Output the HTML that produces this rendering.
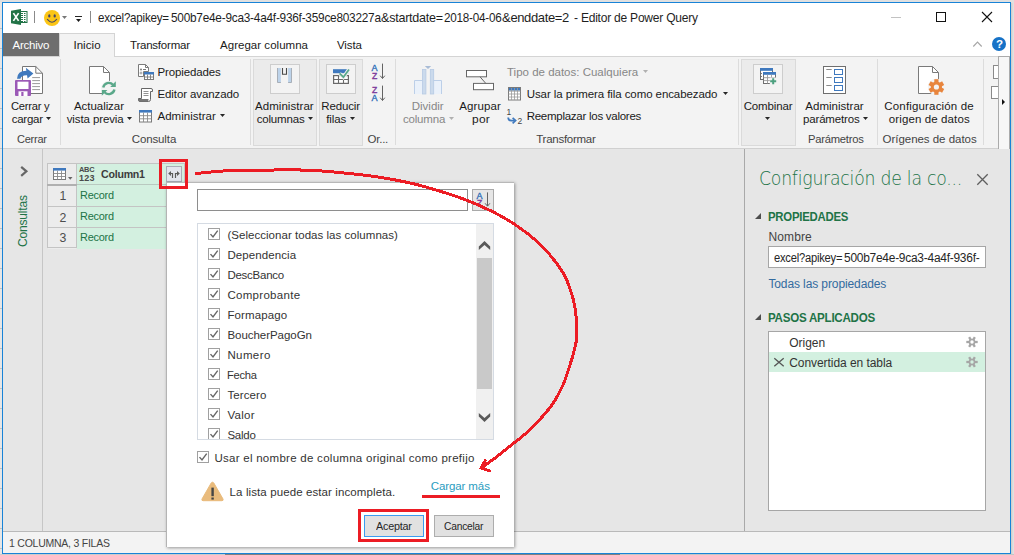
<!DOCTYPE html>
<html lang="es"><head><meta charset="utf-8"><title>Editor de Power Query</title>
<style>
html,body{margin:0;padding:0;}
body{width:1014px;height:555px;overflow:hidden;position:relative;background:#e2e2e2;font-family:"Liberation Sans",sans-serif;}
#w{position:absolute;left:0;top:0;width:1014px;height:555px;overflow:hidden;}
#w div,#w span.t,#w svg{position:absolute;box-sizing:border-box;}
#w svg{overflow:visible;}
span.t{white-space:pre;display:block;}
</style></head><body><div id="w">
<div style="left:0px;top:0px;width:1014px;height:555px;background:#e0e0e0"></div>
<div style="left:0px;top:554px;width:1014px;height:1px;background:linear-gradient(90deg,#cdcdcd 0,#cdcdcd 225px,#808080 225px,#808080 620px,#c6c6c6 620px)"></div>
<div style="left:0px;top:2px;width:2px;height:552px;background:repeating-linear-gradient(180deg,#e6e6e6 0,#e6e6e6 19px,#c2c2c2 19px,#c2c2c2 20px);background-position:0 7px"></div>
<div style="left:1011px;top:3px;width:3px;height:551px;background:linear-gradient(90deg,#cfcac7,#dedcdb 60%,#e4e4e4)"></div>
<div style="left:2px;top:2px;width:1009px;height:552px;background:#fff;border:1px solid #1883d7"></div>
<span class="t" style="left:98.3px;top:11.00px;font-size:13px;line-height:13px;color:#1e1e1e;letter-spacing:-0.250px;transform:scaleX(0.8903);transform-origin:0 0;">excel?apikey=</span>
<span class="t" style="left:170.5px;top:11.00px;font-size:13px;line-height:13px;color:#1e1e1e;letter-spacing:-0.250px;transform:scaleX(0.9082);transform-origin:0 0;">500b7e4e-9ca3-4a4f-936f-359ce803227a</span>
<span class="t" style="left:380.6px;top:11.00px;font-size:13px;line-height:13px;color:#1e1e1e;letter-spacing:-0.250px;transform:scaleX(0.9649);transform-origin:0 0;">&amp;startdate=</span>
<span class="t" style="left:444px;top:11.00px;font-size:13px;line-height:13px;color:#1e1e1e;letter-spacing:-0.250px;transform:scaleX(0.8981);transform-origin:0 0;">2018-04-06</span>
<span class="t" style="left:502.1px;top:11.00px;font-size:13px;line-height:13px;color:#1e1e1e;letter-spacing:-0.376px;">&amp;enddate=2</span>
<span class="t" style="left:573.8px;top:11.00px;font-size:13px;line-height:13px;color:#1e1e1e;letter-spacing:-0.250px;transform:scaleX(0.9257);transform-origin:0 0;">- Editor de Power Query</span>
<div style="left:34px;top:11px;width:1px;height:12px;background:#8a8a8a"></div>
<div style="left:90px;top:11px;width:1px;height:12px;background:#8a8a8a"></div>
<svg style="left:11px;top:9px" width="16" height="16" viewBox="0 0 16 16"><rect x="8" y="2.5" width="8" height="11" fill="#fff" stroke="#217346" stroke-width="1"/>
<path d="M9.5 4.5h5M9.5 6.5h5M9.5 8.5h5M9.5 10.5h5M9.5 12.5h5" stroke="#217346" stroke-width="1"/><path d="M12.5 3v10" stroke="#fff" stroke-width="1"/>
<path d="M0 1.8L10 0v16L0 14.2Z" fill="#217346"/>
<path d="M2.4 4.1L7.6 11.9M7.6 4.1L2.4 11.9" stroke="#fff" stroke-width="1.7"/></svg>
<svg style="left:43.5px;top:10px" width="16" height="16" viewBox="0 0 16 16"><circle cx="8" cy="8" r="8" fill="#fbc516"/>
<ellipse cx="5.3" cy="5.9" rx="1.15" ry="1.7" fill="#45456a"/><ellipse cx="10.7" cy="5.9" rx="1.15" ry="1.7" fill="#45456a"/>
<path d="M3.4 9.4Q8 15 12.6 9.4" fill="none" stroke="#4a4a66" stroke-width="1.1" stroke-linecap="round"/></svg>
<svg style="left:62px;top:16px" width="5" height="3" viewBox="0 0 5 3"><path d="M0 0H5L2.5 3Z" fill="#777"/></svg>
<div style="left:75px;top:16px;width:7px;height:1px;background:#262626"></div>
<svg style="left:76px;top:19px" width="5" height="3" viewBox="0 0 5 3"><path d="M0 0H5L2.5 3Z" fill="#1a1a1a"/></svg>
<div style="left:891px;top:17px;width:10px;height:1px;background:#c2c2c2"></div>
<div style="left:936px;top:12px;width:10px;height:10px;border:1px solid #111"></div>
<svg style="left:982px;top:12px" width="10" height="10" viewBox="0 0 10 10"><path d="M0 0L10 10M10 0L0 10" stroke="#111" stroke-width="1.1"/></svg>
<div style="left:3px;top:33px;width:56px;height:23px;background:#6e6e6e"></div>
<div style="left:3px;top:56px;width:1007px;height:93px;background:#f3f3f3;border-bottom:1px solid #d0d0d0"></div>
<div style="left:59px;top:33px;width:56px;height:24px;background:#f3f3f3;border:1px solid #d4d4d4;border-bottom:none"></div>
<div style="left:3px;top:56px;width:56px;height:1px;background:#d4d4d4"></div>
<div style="left:115px;top:56px;width:895px;height:1px;background:#d4d4d4"></div>
<span class="t" style="left:12.5px;top:40.00px;font-size:11.5px;line-height:11.5px;color:#fff;letter-spacing:-0.227px;">Archivo</span>
<span class="t" style="left:73.4px;top:40.00px;font-size:11.5px;line-height:11.5px;color:#1a1a1a;letter-spacing:0.068px;">Inicio</span>
<span class="t" style="left:130px;top:40.00px;font-size:11.5px;line-height:11.5px;color:#1a1a1a;letter-spacing:-0.220px;">Transformar</span>
<span class="t" style="left:220px;top:40.00px;font-size:11.5px;line-height:11.5px;color:#1a1a1a;letter-spacing:0.030px;">Agregar columna</span>
<span class="t" style="left:337px;top:40.00px;font-size:11.5px;line-height:11.5px;color:#1a1a1a;letter-spacing:-0.090px;">Vista</span>
<svg style="left:972.5px;top:41px" width="9" height="6" viewBox="0 0 9 6"><path d="M0.3 5.5L4.5 1L8.7 5.5" fill="none" stroke="#a6a6a6" stroke-width="1.1"/></svg>
<svg style="left:992px;top:37px" width="14" height="14" viewBox="0 0 14 14"><circle cx="7" cy="7" r="7" fill="#1672c7"/></svg>
<span class="t" style="left:996px;top:39.00px;font-size:11.5px;line-height:11.5px;color:#fff;font-weight:700;">?</span>
<div style="left:60px;top:59px;width:1px;height:86px;background:#dcdcdc"></div>
<div style="left:250px;top:59px;width:1px;height:86px;background:#dcdcdc"></div>
<div style="left:395px;top:59px;width:1px;height:86px;background:#dcdcdc"></div>
<div style="left:738px;top:59px;width:1px;height:86px;background:#dcdcdc"></div>
<div style="left:877px;top:59px;width:1px;height:86px;background:#dcdcdc"></div>
<div style="left:983px;top:59px;width:1px;height:86px;background:#dcdcdc"></div>
<span class="t" style="left:16.7px;top:134.00px;font-size:11.5px;line-height:11.5px;color:#444;letter-spacing:-0.250px;transform:scaleX(0.9571);transform-origin:0 0;">Cerrar</span>
<span class="t" style="left:131.7px;top:134.00px;font-size:11.5px;line-height:11.5px;color:#444;letter-spacing:-0.113px;">Consulta</span>
<span class="t" style="left:367.5px;top:134.00px;font-size:11.5px;line-height:11.5px;color:#444;letter-spacing:-0.234px;">Or...</span>
<span class="t" style="left:536.3px;top:134.00px;font-size:11.5px;line-height:11.5px;color:#444;letter-spacing:-0.270px;">Transformar</span>
<span class="t" style="left:807.5px;top:134.00px;font-size:11.5px;line-height:11.5px;color:#444;letter-spacing:-0.250px;transform:scaleX(0.9757);transform-origin:0 0;">Parámetros</span>
<span class="t" style="left:882.5px;top:134.00px;font-size:11.5px;line-height:11.5px;color:#444;letter-spacing:-0.027px;">Orígenes de datos</span>
<span class="t" style="left:11.3px;top:101.00px;font-size:11.5px;line-height:11.5px;color:#1a1a1a;letter-spacing:-0.250px;transform:scaleX(0.9728);transform-origin:0 0;">Cerrar y</span>
<span class="t" style="left:11.7px;top:114.00px;font-size:11.5px;line-height:11.5px;color:#1a1a1a;letter-spacing:-0.262px;">cargar</span>
<svg style="left:46px;top:117.3px" width="5" height="3" viewBox="0 0 5 3"><path d="M0 0H5L2.5 3Z" fill="#262626"/></svg>
<span class="t" style="left:74px;top:101.00px;font-size:11.5px;line-height:11.5px;color:#1a1a1a;letter-spacing:-0.056px;">Actualizar</span>
<span class="t" style="left:66.7px;top:114.00px;font-size:11.5px;line-height:11.5px;color:#1a1a1a;letter-spacing:-0.107px;">vista previa</span>
<svg style="left:126.7px;top:117.3px" width="5" height="3" viewBox="0 0 5 3"><path d="M0 0H5L2.5 3Z" fill="#262626"/></svg>
<span class="t" style="left:157.5px;top:67.00px;font-size:11.5px;line-height:11.5px;color:#1a1a1a;letter-spacing:-0.128px;">Propiedades</span>
<span class="t" style="left:157.5px;top:89.00px;font-size:11.5px;line-height:11.5px;color:#1a1a1a;letter-spacing:-0.102px;">Editor avanzado</span>
<span class="t" style="left:157.5px;top:111.00px;font-size:11.5px;line-height:11.5px;color:#1a1a1a;letter-spacing:0.014px;">Administrar</span>
<svg style="left:220px;top:114px" width="5" height="3" viewBox="0 0 5 3"><path d="M0 0H5L2.5 3Z" fill="#262626"/></svg>
<div style="left:253px;top:59px;width:64px;height:87px;background:#ebebeb;border:1px solid #dadada"></div>
<div style="left:270px;top:64px;width:30px;height:30px;background:#f3f3f3;border:1px solid #cdcdcd"></div>
<div style="left:319px;top:59px;width:44px;height:87px;background:#ebebeb;border:1px solid #dadada"></div>
<div style="left:326px;top:64px;width:30px;height:30px;background:#f3f3f3;border:1px solid #cdcdcd"></div>
<div style="left:741px;top:59px;width:55px;height:87px;background:#ebebeb;border:1px solid #dadada"></div>
<div style="left:753px;top:64px;width:30px;height:30px;background:#f3f3f3;border:1px solid #cdcdcd"></div>
<span class="t" style="left:255px;top:101.00px;font-size:11.5px;line-height:11.5px;color:#1a1a1a;letter-spacing:0.054px;">Administrar</span>
<span class="t" style="left:256.7px;top:114.00px;font-size:11.5px;line-height:11.5px;color:#1a1a1a;letter-spacing:-0.174px;">columnas</span>
<svg style="left:308px;top:117.3px" width="5" height="3" viewBox="0 0 5 3"><path d="M0 0H5L2.5 3Z" fill="#262626"/></svg>
<span class="t" style="left:321.3px;top:101.00px;font-size:11.5px;line-height:11.5px;color:#1a1a1a;letter-spacing:-0.157px;">Reducir</span>
<span class="t" style="left:326.2px;top:114.00px;font-size:11.5px;line-height:11.5px;color:#1a1a1a;letter-spacing:-0.088px;">filas</span>
<svg style="left:349.7px;top:117.3px" width="5" height="3" viewBox="0 0 5 3"><path d="M0 0H5L2.5 3Z" fill="#262626"/></svg>
<span class="t" style="left:411.7px;top:101.00px;font-size:11.5px;line-height:11.5px;color:#878787;letter-spacing:0.008px;">Dividir</span>
<span class="t" style="left:403px;top:114.00px;font-size:11.5px;line-height:11.5px;color:#878787;letter-spacing:-0.195px;">columna</span>
<svg style="left:449.2px;top:117.3px" width="5" height="3" viewBox="0 0 5 3"><path d="M0 0H5L2.5 3Z" fill="#b0b0b0"/></svg>
<span class="t" style="left:459.2px;top:101.00px;font-size:11.5px;line-height:11.5px;color:#1a1a1a;letter-spacing:0.113px;">Agrupar</span>
<span class="t" style="left:471.7px;top:114.00px;font-size:11.5px;line-height:11.5px;color:#1a1a1a;letter-spacing:0.250px;transform:scaleX(1.0394);transform-origin:0 0;">por</span>
<span class="t" style="left:507px;top:67.00px;font-size:11.5px;line-height:11.5px;color:#878787;">Tipo de datos: Cualquiera</span>
<svg style="left:643px;top:70px" width="5" height="3" viewBox="0 0 5 3"><path d="M0 0H5L2.5 3Z" fill="#b0b0b0"/></svg>
<span class="t" style="left:526.7px;top:89.00px;font-size:11.5px;line-height:11.5px;color:#1a1a1a;letter-spacing:-0.082px;">Usar la primera fila como encabezado</span>
<svg style="left:722.8px;top:92.3px" width="5" height="3" viewBox="0 0 5 3"><path d="M0 0H5L2.5 3Z" fill="#262626"/></svg>
<span class="t" style="left:526.7px;top:111.00px;font-size:11.5px;line-height:11.5px;color:#1a1a1a;letter-spacing:-0.265px;">Reemplazar los valores</span>
<span class="t" style="left:743.7px;top:101.00px;font-size:11.5px;line-height:11.5px;color:#1a1a1a;letter-spacing:-0.151px;">Combinar</span>
<svg style="left:765px;top:117.3px" width="5" height="3" viewBox="0 0 5 3"><path d="M0 0H5L2.5 3Z" fill="#262626"/></svg>
<span class="t" style="left:805.3px;top:101.00px;font-size:11.5px;line-height:11.5px;color:#1a1a1a;letter-spacing:0.024px;">Administrar</span>
<span class="t" style="left:803px;top:114.00px;font-size:11.5px;line-height:11.5px;color:#1a1a1a;letter-spacing:-0.164px;">parámetros</span>
<svg style="left:863px;top:117.3px" width="5" height="3" viewBox="0 0 5 3"><path d="M0 0H5L2.5 3Z" fill="#262626"/></svg>
<span class="t" style="left:884.3px;top:101.00px;font-size:11.5px;line-height:11.5px;color:#1a1a1a;letter-spacing:0.163px;">Configuración de</span>
<span class="t" style="left:888.8px;top:114.00px;font-size:11.5px;line-height:11.5px;color:#1a1a1a;letter-spacing:0.115px;">origen de datos</span>
<svg style="left:15px;top:66px" width="28" height="30" viewBox="0 0 28 30"><path d="M7.5 0.5H20.8L27.5 7.2V27.5H7.5Z" fill="#fff" stroke="#767676"/><path d="M20.8 0.5V7.2H27.5" fill="none" stroke="#767676"/>
<path d="M17.2 11.6h7.8M17.2 14.6h7.8M17.2 17.6h7.8M17.2 20.6h7.8M17.2 23.6h7.8" stroke="#9a9a9a"/>
<path d="M2 12.8Q2.2 5 11.4 4.8L10.8 1.8L18.4 7.4L12.6 12.6L12 9.2Q6.2 9 5.4 12.8Z" fill="#3f79be"/>
<rect x="0" y="14" width="16" height="16" rx="1" fill="#9b59b6"/><rect x="2.5" y="15.7" width="11" height="7.3" fill="#fff"/><rect x="3.5" y="25.3" width="9" height="4.7" fill="#fff"/><rect x="6.3" y="26" width="2.2" height="4" fill="#9b59b6"/></svg>
<svg style="left:89px;top:65.5px" width="28" height="30" viewBox="0 0 28 30"><path d="M0.5 0.5H14.5L20.5 6.5V27.5H0.5Z" fill="#fff" stroke="#7a7a7a"/><path d="M14.5 0.5V6.5H20.5" fill="none" stroke="#7a7a7a"/>
<circle cx="19.8" cy="22.5" r="7.8" fill="#f3f3f3"/>
<path d="M14.2 21.5A5.7 5.7 0 0 1 24 18.8" fill="none" stroke="#5aa88a" stroke-width="2.4"/><path d="M26.8 15.3V21H21.2Z" fill="#5aa88a"/>
<path d="M25.4 23.5A5.7 5.7 0 0 1 15.6 26.2" fill="none" stroke="#5aa88a" stroke-width="2.4"/><path d="M12.8 29.7V24H18.4Z" fill="#5aa88a"/></svg>
<svg style="left:138px;top:64px" width="16" height="16" viewBox="0 0 16 16"><path d="M0.5 0.5H7.5L10.5 3.5V7.5H5.5V12.5H0.5Z" fill="#fff" stroke="#7a7a7a"/><path d="M7.5 0.5V3.5H10.5" fill="none" stroke="#7a7a7a"/>
<circle cx="3" cy="5.5" r="1" fill="#7a7a7a"/><circle cx="3" cy="9" r="1" fill="none" stroke="#7a7a7a" stroke-width="0.7"/><path d="M5 5.5h3" stroke="#7a7a7a"/>
<rect x="6.5" y="8.5" width="9" height="7" fill="#fff" stroke="#7a7a7a"/><rect x="6" y="8" width="10" height="2.5" fill="#3f79be"/><path d="M9.5 10.5v5M12.5 10.5v5M6.5 13h9" stroke="#7a7a7a" stroke-width="0.9"/></svg>
<svg style="left:138px;top:87.5px" width="15" height="14" viewBox="0 0 15 14"><path d="M3.5 0.5H13Q14.5 0.5 14.5 2V3.5H12.5V11.5Q12.5 13.5 10.5 13.5H2Q0.5 13.5 0.5 12V10.5H3.5Z" fill="#fff" stroke="#666"/>
<path d="M0.5 11H10.5V12Q10.5 13.5 9 13.5H2Q0.5 13.5 0.5 12Z" fill="#777"/>
<path d="M5.5 3.5h5M5.5 5.5h5M5.5 7.5h5" stroke="#888" stroke-width="0.9"/></svg>
<svg style="left:139px;top:109.5px" width="13" height="12.5" viewBox="0 0 13 12.5"><rect x="0.5" y="0.5" width="12" height="11.5" fill="#fff" stroke="#7a7a7a"/><rect x="0" y="0" width="13" height="2.6" fill="#3f79be"/>
<path d="M4.5 2.6V12M8.5 2.6V12M0.5 5.7H12.5M0.5 8.8H12.5" stroke="#8a8a8a" stroke-width="0.9"/></svg>
<svg style="left:277px;top:68px" width="15" height="15" viewBox="0 0 15 15"><rect x="0.4" y="0" width="3.5" height="14.6" fill="#bdd3ea"/><rect x="11.1" y="0" width="3.5" height="14.6" fill="#bdd3ea"/>
<path d="M0.5 0V14.5H3.9M14.5 0V14.5H11.1" fill="none" stroke="#a3a9b2" stroke-width="0.9"/>
<path d="M5.5 0V6.2H9.5V0" fill="none" stroke="#4a4a4a" stroke-width="1.1"/></svg>
<svg style="left:333px;top:69px" width="16" height="15" viewBox="0 0 16 15"><rect x="0" y="0.2" width="16" height="4" fill="#3f79be"/><rect x="0.6" y="6.6" width="14.8" height="7.8" fill="#fff" stroke="#6a6a6a" stroke-width="1.2"/>
<path d="M5.5 6.6V14.4M10.5 6.6V14.4M0.6 10.5H15.4" stroke="#6a6a6a" stroke-width="1.1"/>
<path d="M6.6 4.4L10.4 8.2L16 0.4" fill="none" stroke="#f3f3f3" stroke-width="3.6"/><path d="M6.6 4.4L10.4 8.2L16 0.4" fill="none" stroke="#5aa88a" stroke-width="1.8"/></svg>
<span class="t" style="left:371.6px;top:64.00px;font-size:9px;line-height:9px;color:#2f6eb8;-webkit-text-stroke:0.35px #2f6eb8;">A</span>
<span class="t" style="left:372px;top:72.00px;font-size:8.6px;line-height:8.6px;color:#7d3c9c;-webkit-text-stroke:0.35px #7d3c9c;">Z</span>
<svg style="left:379px;top:63.3px" width="7" height="16" viewBox="0 0 7 16"><path d="M3.5 0.6V15.4M1.2 12.7L3.5 15.5L5.8 12.7" fill="none" stroke="#636363" stroke-width="1"/></svg>
<span class="t" style="left:372px;top:86.00px;font-size:8.6px;line-height:8.6px;color:#7d3c9c;-webkit-text-stroke:0.35px #7d3c9c;">Z</span>
<span class="t" style="left:371.6px;top:94.00px;font-size:9px;line-height:9px;color:#2f6eb8;-webkit-text-stroke:0.35px #2f6eb8;">A</span>
<svg style="left:379px;top:85.3px" width="7" height="16" viewBox="0 0 7 16"><path d="M3.5 0.6V15.4M1.2 12.7L3.5 15.5L5.8 12.7" fill="none" stroke="#636363" stroke-width="1"/></svg>
<svg style="left:414px;top:66px" width="28" height="28" viewBox="0 0 28 28"><path d="M10.8 0H17.2L14 2.9Z" fill="#a9bcd6"/>
<path d="M0.5 28V14.5H8.5M27.5 28V14.5H19.5" fill="#eaf1fa" stroke="#bccfe8"/><rect x="1" y="15" width="7.5" height="13" fill="#eaf1fa"/><rect x="19.5" y="15" width="7.5" height="13" fill="#eaf1fa"/>
<rect x="8.5" y="3.5" width="3.4" height="24.5" fill="#cbdaec" stroke="#b6cae4" stroke-width="0.8"/><rect x="16.3" y="3.5" width="3.4" height="24.5" fill="#cbdaec" stroke="#b6cae4" stroke-width="0.8"/></svg>
<svg style="left:466px;top:70px" width="28" height="20" viewBox="0 0 28 20"><rect x="0.5" y="0.5" width="20" height="6.3" fill="#fff" stroke="#666"/><rect x="7.5" y="13.4" width="20" height="6.3" fill="#fff" stroke="#666"/><path d="M14 6.8L19.8 13.4" stroke="#666"/></svg>
<svg style="left:508px;top:86.5px" width="13" height="13.5" viewBox="0 0 13 13.5"><rect x="0.5" y="0.5" width="12" height="12.5" fill="#fff" stroke="#7a7a7a"/><rect x="1" y="1" width="11" height="2.6" fill="#3f79be"/>
<path d="M3.5 1V13M6.5 1V13M9.5 1V13M0.5 4.2H12.5M0.5 7H12.5M0.5 10H12.5" stroke="#9a9a9a" stroke-width="0.8"/></svg>
<span class="t" style="left:506.5px;top:108.00px;font-size:8.5px;line-height:8.5px;color:#444;">1</span>
<span class="t" style="left:517.5px;top:117.00px;font-size:8.5px;line-height:8.5px;color:#444;">2</span>
<svg style="left:507px;top:117px" width="10" height="7" viewBox="0 0 10 7"><path d="M1.2 0.4Q1.2 3.6 4.6 3.6H7.4" fill="none" stroke="#3f79be" stroke-width="1.7"/><path d="M5.6 0.9L8.6 3.6L5.6 6.3" fill="none" stroke="#3f79be" stroke-width="1.7"/></svg>
<svg style="left:760px;top:68px" width="17" height="17" viewBox="0 0 17 17"><rect x="0.5" y="0.5" width="12" height="11" fill="#fff" stroke="#6e6e6e"/><rect x="0" y="0" width="13" height="2.8" fill="#3f79be"/>
<path d="M0.5 5.5H2M0.5 8.5H2" stroke="#6e6e6e" stroke-width="0.9"/>
<rect x="3.5" y="4.5" width="12" height="11" fill="#fff" stroke="#6e6e6e"/><rect x="3" y="4" width="13" height="2.8" fill="#3f79be"/>
<path d="M7.5 6.8V15.5M11.5 6.8V10M3.5 9.7H15.5M3.5 12.6H10.5" stroke="#9a9a9a" stroke-width="0.9"/>
<rect x="9.8" y="9.6" width="7" height="7" fill="#f3f3f3"/><path d="M13.2 10.2V16.2M10.2 13.2H16.2" stroke="#4da07f" stroke-width="2"/></svg>
<svg style="left:823px;top:66px" width="23" height="28" viewBox="0 0 23 28"><rect x="0.5" y="0.5" width="22" height="27" fill="#fff" stroke="#6e6e6e"/>
<path d="M3.3 3.5H8.7M3.3 11.5H8.7M3.3 19.5H8.7" stroke="#8a8a8a"/>
<rect x="11.5" y="3.5" width="8" height="5" fill="#fff" stroke="#3f79be"/><rect x="11.5" y="11.5" width="8" height="5" fill="#fff" stroke="#3f79be"/><rect x="11.5" y="19.5" width="8" height="5" fill="#fff" stroke="#3f79be"/></svg>
<svg style="left:918px;top:66px" width="28" height="30" viewBox="0 0 28 30"><path d="M0.5 0.5H14.5L20.5 6.5V27.5H0.5Z" fill="#fff" stroke="#7a7a7a"/><path d="M14.5 0.5V6.5H20.5" fill="none" stroke="#7a7a7a"/>
<circle cx="18.4" cy="21" r="8.6" fill="#f3f3f3"/><g transform="translate(18.4 21)"><rect x="-2.106" y="-7.8" width="4.212" height="15.6" fill="#e8853d" transform="rotate(0)"/><rect x="-2.106" y="-7.8" width="4.212" height="15.6" fill="#e8853d" transform="rotate(60)"/><rect x="-2.106" y="-7.8" width="4.212" height="15.6" fill="#e8853d" transform="rotate(120)"/><circle r="5.616" fill="#e8853d"/><circle r="2.6" fill="#f3f3f3"/></g></svg>
<div style="left:993px;top:65px;width:6px;height:14px;background:#fff;border:1px solid #8a8a8a"></div>
<div style="left:991px;top:86px;width:8px;height:13px;background:#fff;border:1px solid #8a8a8a"></div>
<div style="left:998px;top:56px;width:12px;height:93px;background:#f7f7f7;border:1px solid #ababab;border-bottom:none"></div>
<svg style="left:1002px;top:98.5px" width="3" height="6" viewBox="0 0 3 6"><path d="M0 0L3 3L0 6Z" fill="#111"/></svg>
<div style="left:3px;top:149px;width:1007px;height:382px;background:#e6e6e6"></div>
<div style="left:42px;top:149px;width:1px;height:382px;background:#c6c6c6"></div>
<svg style="left:19.5px;top:166px" width="8" height="11" viewBox="0 0 8 11"><path d="M1.2 0.8L6.4 5.3L1.2 9.8" fill="none" stroke="#666" stroke-width="2.2"/></svg>
<span class="t" style="left:-3px;top:215.00px;font-size:12px;line-height:12px;color:#217346;letter-spacing:-0.172px;transform:rotate(-90deg);transform-origin:26px 50%;">Consultas</span>
<div style="left:47px;top:163px;width:138px;height:85px;background:#c4c4c4"></div>
<div style="left:48px;top:164px;width:28px;height:20px;background:#ececec"></div>
<div style="left:77px;top:164px;width:107px;height:20px;background:#d3f0e0"></div>
<div style="left:48px;top:186px;width:28px;height:20px;background:#ececec"></div>
<div style="left:77px;top:186px;width:90px;height:20px;background:#d3f0e0"></div>
<span class="t" style="left:59.5px;top:190.00px;font-size:12.3px;line-height:12.3px;color:#4d4d4d;">1</span>
<span class="t" style="left:79.8px;top:190.00px;font-size:11.5px;line-height:11.5px;color:#217346;letter-spacing:-0.250px;transform:scaleX(0.9490);transform-origin:0 0;">Record</span>
<div style="left:48px;top:207px;width:28px;height:20px;background:#ececec"></div>
<div style="left:77px;top:207px;width:90px;height:20px;background:#d3f0e0"></div>
<span class="t" style="left:59.5px;top:212.00px;font-size:12.3px;line-height:12.3px;color:#4d4d4d;">2</span>
<span class="t" style="left:79.8px;top:211.00px;font-size:11.5px;line-height:11.5px;color:#217346;letter-spacing:-0.250px;transform:scaleX(0.9490);transform-origin:0 0;">Record</span>
<div style="left:48px;top:228px;width:28px;height:20.5px;background:#ececec"></div>
<div style="left:77px;top:228px;width:90px;height:21px;background:#d3f0e0"></div>
<span class="t" style="left:59.5px;top:232.00px;font-size:12.3px;line-height:12.3px;color:#4d4d4d;">3</span>
<span class="t" style="left:79.8px;top:232.00px;font-size:11.5px;line-height:11.5px;color:#217346;letter-spacing:-0.250px;transform:scaleX(0.9490);transform-origin:0 0;">Record</span>
<div style="left:47px;top:184px;width:30px;height:2px;background:#b0b0b0"></div>
<div style="left:77px;top:184px;width:90px;height:1px;background:#b9c9c0"></div>
<div style="left:77px;top:185px;width:90px;height:1px;background:#d3f0e0"></div>
<div style="left:77px;top:247px;width:90px;height:1px;background:#d3f0e0"></div>
<div style="left:47px;top:247px;width:30px;height:1px;background:#c4c4c4"></div>
<svg style="left:53px;top:168px" width="13" height="12" viewBox="0 0 13 12"><rect x="0.5" y="0.5" width="12" height="11" fill="#fff" stroke="#7a7a7a"/><rect x="0" y="0" width="13" height="2.6" fill="#3f79be"/>
<path d="M4.5 2.6V11.5M8.5 2.6V11.5M0.5 5.5H12.5M0.5 8.5H12.5" stroke="#8a8a8a" stroke-width="0.9"/></svg>
<svg style="left:67.5px;top:176.5px" width="4.5" height="2.7" viewBox="0 0 4.5 2.7"><path d="M0 0H4.5L2.25 2.7Z" fill="#666"/></svg>
<span class="t" style="left:79px;top:166.00px;font-size:7.6px;line-height:7.6px;color:#4a4a4a;font-weight:700;letter-spacing:-0.250px;transform:scaleX(0.9779);transform-origin:0 0;">ABC</span>
<span class="t" style="left:79.2px;top:174.00px;font-size:8.8px;line-height:8.8px;color:#4a4a4a;font-weight:700;letter-spacing:0.250px;transform:scaleX(1.0272);transform-origin:0 0;">123</span>
<span class="t" style="left:101px;top:169.00px;font-size:11.5px;line-height:11.5px;color:#3c3c3c;font-weight:700;letter-spacing:-0.250px;transform:scaleX(0.9224);transform-origin:0 0;">Column1</span>
<div style="left:166px;top:166px;width:16px;height:16px;background:#e3e5ee;border:1px solid #a9adb8"></div>
<svg style="left:166px;top:166px" width="16" height="16" viewBox="0 0 16 16"><path d="M6.5 12V7.5H4.5M9.5 12V7.5H11.5" fill="none" stroke="#5a5a5a" stroke-width="1.2"/><path d="M2.2 7.5L5 5V10ZM13.8 7.5L11 5V10Z" fill="#5a5a5a"/></svg>
<div style="left:744px;top:149px;width:1px;height:382px;background:#a9a9a9"></div>
<span class="t" style="left:758.6px;top:169.00px;font-size:19.5px;line-height:19.5px;color:#217346;font-weight:200;letter-spacing:-0.250px;transform:scaleX(0.8843);transform-origin:0 0;font-family:'DejaVu Sans','Liberation Sans',sans-serif;">Configuración de la co...</span>
<svg style="left:976.5px;top:173.5px" width="11" height="11" viewBox="0 0 11 11"><path d="M0.3 0.3L10.7 10.7M10.7 0.3L0.3 10.7" stroke="#5e5e5e" stroke-width="1.3"/></svg>
<svg style="left:755.3px;top:213px" width="6" height="6" viewBox="0 0 6 6"><path d="M6 0V6H0Z" fill="#4d4d4d"/></svg>
<svg style="left:755.3px;top:314.2px" width="6" height="6" viewBox="0 0 6 6"><path d="M6 0V6H0Z" fill="#4d4d4d"/></svg>
<span class="t" style="left:768.4px;top:211.00px;font-size:12px;line-height:12px;color:#217346;font-weight:700;letter-spacing:-0.250px;transform:scaleX(0.9474);transform-origin:0 0;">PROPIEDADES</span>
<span class="t" style="left:768.4px;top:231.00px;font-size:12px;line-height:12px;color:#444;letter-spacing:0.142px;">Nombre</span>
<div style="left:768px;top:246px;width:218px;height:22px;background:#fff;border:1px solid #a6a6a6"></div>
<span class="t" style="left:774px;top:252.00px;font-size:12.5px;line-height:12.5px;color:#262626;letter-spacing:-0.250px;transform:scaleX(0.8945);transform-origin:0 0;">excel?apikey=</span>
<span class="t" style="left:843.7px;top:252.00px;font-size:12.5px;line-height:12.5px;color:#262626;letter-spacing:-0.250px;transform:scaleX(0.9537);transform-origin:0 0;">500b7e4e-9ca3-4a4f-936f-</span>
<span class="t" style="left:768.4px;top:278.00px;font-size:12px;line-height:12px;color:#336b9f;letter-spacing:-0.105px;">Todas las propiedades</span>
<span class="t" style="left:768.4px;top:312.00px;font-size:12px;line-height:12px;color:#217346;font-weight:700;letter-spacing:-0.250px;transform:scaleX(0.9641);transform-origin:0 0;">PASOS APLICADOS</span>
<div style="left:768px;top:331px;width:218px;height:180px;background:#fff;border:1px solid #a6a6a6"></div>
<div style="left:769px;top:352px;width:216px;height:20px;background:#d3f0e0"></div>
<span class="t" style="left:789.2px;top:337.00px;font-size:12px;line-height:12px;color:#333;letter-spacing:-0.006px;">Origen</span>
<span class="t" style="left:789.2px;top:357.00px;font-size:12px;line-height:12px;color:#333;letter-spacing:-0.060px;">Convertida en tabla</span>
<svg style="left:774.4px;top:357.6px" width="10" height="8.6" viewBox="0 0 10 8.6"><path d="M0.3 0.3L9.7 8.3M9.7 0.3L0.3 8.3" stroke="#555" stroke-width="1.3"/></svg>
<svg style="left:965.5px;top:335.8px" width="12" height="12" viewBox="0 0 12 12"><g transform="rotate(90 6 6)"><g transform="translate(6 6)"><rect x="-1.14" y="-5.7" width="2.28" height="11.4" fill="#a6a6a6" transform="rotate(0)"/><rect x="-1.14" y="-5.7" width="2.28" height="11.4" fill="#a6a6a6" transform="rotate(60)"/><rect x="-1.14" y="-5.7" width="2.28" height="11.4" fill="#a6a6a6" transform="rotate(120)"/><circle r="3.306" fill="#a6a6a6"/><circle r="1.7" fill="#fff"/></g></g></svg>
<svg style="left:965.5px;top:355.9px" width="12" height="12" viewBox="0 0 12 12"><g transform="rotate(90 6 6)"><g transform="translate(6 6)"><rect x="-1.14" y="-5.7" width="2.28" height="11.4" fill="#a6a6a6" transform="rotate(0)"/><rect x="-1.14" y="-5.7" width="2.28" height="11.4" fill="#a6a6a6" transform="rotate(60)"/><rect x="-1.14" y="-5.7" width="2.28" height="11.4" fill="#a6a6a6" transform="rotate(120)"/><circle r="3.306" fill="#a6a6a6"/><circle r="1.7" fill="#d3f0e0"/></g></g></svg>
<div style="left:3px;top:531px;width:1007px;height:22px;background:#f3f3f3;border-top:1px solid #b9b9b9"></div>
<span class="t" style="left:8.9px;top:538.00px;font-size:11px;line-height:11px;color:#444;letter-spacing:-0.250px;transform:scaleX(0.9547);transform-origin:0 0;">1 COLUMNA, 3 FILAS</span>
<div style="left:166px;top:182px;width:348px;height:365px;background:#fff;border-left:1px solid #b4b4b4;border-top:1px solid #b8b8b8;box-shadow:1px 1px 3px rgba(0,0,0,0.38)"></div>
<div style="left:197px;top:189px;width:271px;height:22px;background:#fff;border:1px solid #8e8e8e"></div>
<div style="left:472px;top:189px;width:22px;height:22px;background:#e6e6e6;border:1px solid #a9a9a9"></div>
<span class="t" style="left:476.5px;top:192.00px;font-size:9px;line-height:9px;color:#2f6eb8;-webkit-text-stroke:0.35px #2f6eb8;">A</span>
<span class="t" style="left:476.9px;top:199.00px;font-size:8.5px;line-height:8.5px;color:#7d3c9c;-webkit-text-stroke:0.35px #7d3c9c;">Z</span>
<svg style="left:484px;top:192px" width="7" height="15" viewBox="0 0 7 15"><path d="M3.5 0.4V14M1.1 11.3L3.5 14.2L5.9 11.3" fill="none" stroke="#636363" stroke-width="1"/></svg>
<div style="left:197px;top:223px;width:297px;height:217px;background:#fff;border:1px solid #d5dbe3"></div>
<div style="left:476px;top:224px;width:17px;height:215px;background:#f0f0f0"></div>
<div style="left:477px;top:258px;width:15px;height:131px;background:#c9c9c9"></div>
<svg style="left:478px;top:240px" width="13" height="11" viewBox="0 0 13 11"><path d="M0.8 10L6.5 5L12.2 10V6.5L6.5 0.9L0.8 6.5Z" fill="#5a5a5a"/></svg>
<svg style="left:478px;top:412px" width="13" height="11" viewBox="0 0 13 11"><path d="M0.8 0.9L6.5 5.9L12.2 0.9V4.4L6.5 10L0.8 4.4Z" fill="#5a5a5a"/></svg>
<svg style="left:208px;top:228px" width="12" height="12" viewBox="0 0 12 12"><rect x="0.5" y="0.5" width="11" height="11" fill="#fff" stroke="#a0a0a0"/><path d="M2.5 6.1L5 8.9L9.7 2.6" fill="none" stroke="#666" stroke-width="1.4"/></svg>
<span class="t" style="left:227.4px;top:230.00px;font-size:11.5px;line-height:11.5px;color:#333;letter-spacing:0.036px;">(Seleccionar todas las columnas)</span>
<svg style="left:208px;top:248px" width="12" height="12" viewBox="0 0 12 12"><rect x="0.5" y="0.5" width="11" height="11" fill="#fff" stroke="#a0a0a0"/><path d="M2.5 6.1L5 8.9L9.7 2.6" fill="none" stroke="#666" stroke-width="1.4"/></svg>
<span class="t" style="left:227.4px;top:250.00px;font-size:11.5px;line-height:11.5px;color:#333;letter-spacing:0.092px;">Dependencia</span>
<svg style="left:208px;top:268px" width="12" height="12" viewBox="0 0 12 12"><rect x="0.5" y="0.5" width="11" height="11" fill="#fff" stroke="#a0a0a0"/><path d="M2.5 6.1L5 8.9L9.7 2.6" fill="none" stroke="#666" stroke-width="1.4"/></svg>
<span class="t" style="left:227.4px;top:270.00px;font-size:11.5px;line-height:11.5px;color:#333;letter-spacing:-0.252px;">DescBanco</span>
<svg style="left:208px;top:288px" width="12" height="12" viewBox="0 0 12 12"><rect x="0.5" y="0.5" width="11" height="11" fill="#fff" stroke="#a0a0a0"/><path d="M2.5 6.1L5 8.9L9.7 2.6" fill="none" stroke="#666" stroke-width="1.4"/></svg>
<span class="t" style="left:227.4px;top:290.00px;font-size:11.5px;line-height:11.5px;color:#333;letter-spacing:0.301px;">Comprobante</span>
<svg style="left:208px;top:308px" width="12" height="12" viewBox="0 0 12 12"><rect x="0.5" y="0.5" width="11" height="11" fill="#fff" stroke="#a0a0a0"/><path d="M2.5 6.1L5 8.9L9.7 2.6" fill="none" stroke="#666" stroke-width="1.4"/></svg>
<span class="t" style="left:227.4px;top:310.00px;font-size:11.5px;line-height:11.5px;color:#333;letter-spacing:0.123px;">Formapago</span>
<svg style="left:208px;top:328px" width="12" height="12" viewBox="0 0 12 12"><rect x="0.5" y="0.5" width="11" height="11" fill="#fff" stroke="#a0a0a0"/><path d="M2.5 6.1L5 8.9L9.7 2.6" fill="none" stroke="#666" stroke-width="1.4"/></svg>
<span class="t" style="left:227.4px;top:330.00px;font-size:11.5px;line-height:11.5px;color:#333;letter-spacing:-0.037px;">BoucherPagoGn</span>
<svg style="left:208px;top:348px" width="12" height="12" viewBox="0 0 12 12"><rect x="0.5" y="0.5" width="11" height="11" fill="#fff" stroke="#a0a0a0"/><path d="M2.5 6.1L5 8.9L9.7 2.6" fill="none" stroke="#666" stroke-width="1.4"/></svg>
<span class="t" style="left:227.4px;top:350.00px;font-size:11.5px;line-height:11.5px;color:#333;letter-spacing:0.399px;">Numero</span>
<svg style="left:208px;top:368px" width="12" height="12" viewBox="0 0 12 12"><rect x="0.5" y="0.5" width="11" height="11" fill="#fff" stroke="#a0a0a0"/><path d="M2.5 6.1L5 8.9L9.7 2.6" fill="none" stroke="#666" stroke-width="1.4"/></svg>
<span class="t" style="left:227.4px;top:370.00px;font-size:11.5px;line-height:11.5px;color:#333;letter-spacing:-0.250px;transform:scaleX(0.9687);transform-origin:0 0;">Fecha</span>
<svg style="left:208px;top:388px" width="12" height="12" viewBox="0 0 12 12"><rect x="0.5" y="0.5" width="11" height="11" fill="#fff" stroke="#a0a0a0"/><path d="M2.5 6.1L5 8.9L9.7 2.6" fill="none" stroke="#666" stroke-width="1.4"/></svg>
<span class="t" style="left:227.4px;top:390.00px;font-size:11.5px;line-height:11.5px;color:#333;letter-spacing:0.107px;">Tercero</span>
<svg style="left:208px;top:408px" width="12" height="12" viewBox="0 0 12 12"><rect x="0.5" y="0.5" width="11" height="11" fill="#fff" stroke="#a0a0a0"/><path d="M2.5 6.1L5 8.9L9.7 2.6" fill="none" stroke="#666" stroke-width="1.4"/></svg>
<span class="t" style="left:227.4px;top:410.00px;font-size:11.5px;line-height:11.5px;color:#333;letter-spacing:0.275px;">Valor</span>
<div style="left:208px;top:428px;width:12px;height:11px;overflow:hidden"><svg style="left:0px;top:0px" width="12" height="12" viewBox="0 0 12 12"><rect x="0.5" y="0.5" width="11" height="11" fill="#fff" stroke="#a0a0a0"/><path d="M2.5 6.1L5 8.9L9.7 2.6" fill="none" stroke="#666" stroke-width="1.4"/></svg></div>
<div style="left:220px;top:425px;width:100px;height:14px;overflow:hidden"><span class="t" style="left:7.4px;top:5.00px;font-size:11.5px;line-height:11.5px;color:#333;letter-spacing:-0.230px;">Saldo</span></div>
<svg style="left:197px;top:451px" width="12" height="12" viewBox="0 0 12 12"><rect x="0.5" y="0.5" width="11" height="11" fill="#fff" stroke="#a0a0a0"/><path d="M2.5 6.1L5 8.9L9.7 2.6" fill="none" stroke="#666" stroke-width="1.4"/></svg>
<span class="t" style="left:214.4px;top:453.00px;font-size:11.5px;line-height:11.5px;color:#333;letter-spacing:0.274px;">Usar el nombre de columna original como prefijo</span>
<svg style="left:201px;top:480.5px" width="23" height="20.5" viewBox="0 0 23 20.5"><path d="M11.5 1.2Q12.3 1.2 12.8 2L22 18Q22.6 19.6 21 19.7H2Q0.4 19.6 1 18L10.2 2Q10.7 1.2 11.5 1.2Z" fill="#e9bb7c" stroke="#e9bb7c" stroke-width="1" stroke-linejoin="round"/><rect x="10.4" y="6.6" width="2.4" height="8.6" fill="#454545"/><rect x="10.4" y="16.5" width="2.4" height="2.1" fill="#454545"/></svg>
<span class="t" style="left:229.6px;top:487.00px;font-size:11.5px;line-height:11.5px;color:#333;letter-spacing:0.104px;">La lista puede estar incompleta.</span>
<span class="t" style="left:430.7px;top:481.00px;font-size:11.5px;line-height:11.5px;color:#2a9cc0;letter-spacing:-0.098px;">Cargar más</span>
<div style="left:364px;top:515px;width:60px;height:22px;background:#e1e1e1;border:1px solid #3c9bf0"></div>
<div style="left:434px;top:515px;width:60px;height:22px;background:#e1e1e1;border:1px solid #adadad"></div>
<span class="t" style="left:376.2px;top:521.00px;font-size:11.5px;line-height:11.5px;color:#262626;letter-spacing:-0.250px;transform:scaleX(0.9386);transform-origin:0 0;">Aceptar</span>
<span class="t" style="left:444.2px;top:521.00px;font-size:11.5px;line-height:11.5px;color:#262626;letter-spacing:-0.250px;transform:scaleX(0.8920);transform-origin:0 0;">Cancelar</span>
<svg style="left:0px;top:0px" width="1014" height="555" viewBox="0 0 1014 555"><g fill="none" stroke="#ec1c24" stroke-width="3" shape-rendering="crispEdges">
<rect x="160.5" y="160.5" width="26" height="27"/>
<rect x="359.5" y="510.5" width="68" height="30"/>
<path d="M422 496.5H500"/>
<path d="M195.2 173.6C199.2 173.2 211.6 171.9 219.0 171.3C226.4 170.7 230.2 170.4 239.4 170.2C248.6 170.0 262.5 170.0 274.0 170.0C285.5 170.0 297.7 169.8 308.6 170.2C319.5 170.6 327.7 171.4 339.2 172.5C350.7 173.6 366.2 175.3 377.7 177.0C389.2 178.7 399.2 180.6 408.0 182.5C416.8 184.4 421.7 185.8 430.6 188.4C439.5 191.0 451.1 194.4 461.3 198.2C471.5 202.0 483.0 206.9 491.9 211.3C500.8 215.7 507.2 219.4 514.9 224.5C522.5 229.6 531.4 236.3 537.8 242.0C544.2 247.7 548.5 252.9 553.1 258.8C557.7 264.7 562.1 270.6 565.4 277.2C568.7 283.8 571.2 292.0 573.0 298.6C574.8 305.2 575.5 310.4 576.1 317.0C576.7 323.6 577.2 331.9 576.7 338.0C576.2 344.1 574.6 348.5 573.3 353.7C572.0 358.9 570.5 363.6 568.7 369.0C566.9 374.4 565.2 380.3 562.6 385.9C560.0 391.5 557.0 397.4 553.4 402.8C549.8 408.2 545.7 413.0 541.1 418.1C536.5 423.2 530.9 428.8 525.8 433.4C520.7 438.0 515.6 441.6 510.5 445.7C505.4 449.8 499.9 454.3 495.2 457.9C490.4 461.5 484.2 465.9 482.0 467.5"/>
<path d="M486 459.3L481 468L490.8 471.2" stroke-linejoin="miter"/>
</g></svg></div></body></html>
